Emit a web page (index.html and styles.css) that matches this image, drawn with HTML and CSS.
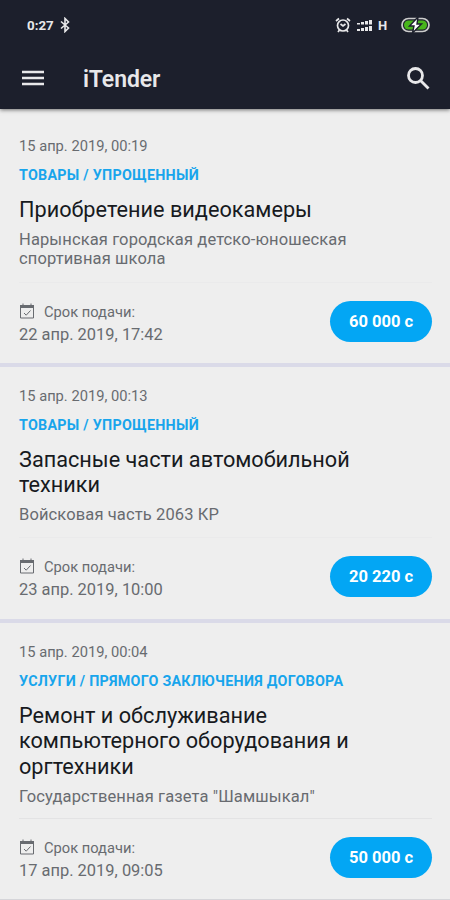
FILE: index.html
```html
<!DOCTYPE html>
<html lang="ru">
<head>
<meta charset="utf-8">
<title>iTender</title>
<link rel="stylesheet" href="styles.css">
</head>
<body>
<header class="top">
  <div class="status">
    <span class="time">0:27</span>
    <svg class="bt" width="10" height="16" viewBox="0 0 10 16"><path d="M1 4.500 8.500 11 5 14.500V1.500L8.500 5 1 11.500"/></svg>
    <span class="spacer"></span>
    <svg class="alarm" width="16" height="16" viewBox="0 0 16 16"><circle cx="8" cy="8.500" r="5.500"/><path d="M1 4 4 1.500M15 4 12 1.500M5.500 7l2.500 2 2.500-2M3 15l1.500-2M13 15l-1.500-2"/></svg>
    <svg class="signal" width="16" height="13" viewBox="0 0 16 13"><path d="M0 4h3v1.500H0zM4 3h3v2.500H4zM8 2h3v3.500H8zM12 1h3v4.500h-3zM0 10h3v2H0zM4 9h3v3H4zM8 8h3v4H8zM12 7h3v5h-3z"/></svg>
    <span class="net">H</span>
    <svg class="battery" width="30" height="16" viewBox="0 0 30 16"><rect class="shell" x="1" y="1.500" width="27" height="13" rx="6.500"/><rect class="charge" x="3" y="3.500" width="23" height="9" rx="4.500"/><path class="bolt" d="M17 0 8.500 9h4.500l-1.500 7 9-9h-4.500z"/></svg>
  </div>
  <div class="bar">
    <svg class="menu" width="22" height="16" viewBox="0 0 22 16"><path d="M0 2h22M0 8h22M0 14h22"/></svg>
    <h1>iTender</h1>
    <svg class="search" width="24" height="24" viewBox="0 0 24 24"><circle cx="9.500" cy="9.500" r="7"/><path d="m14.500 14.500 8 8"/></svg>
  </div>
</header>
<main>
  <article class="card first">
    <div class="date">15 апр. 2019, 00:19</div>
    <div class="type">ТОВАРЫ / УПРОЩЕННЫЙ</div>
    <h2>Приобретение видеокамеры</h2>
    <p>Нарынская городская детско-юношеская<br>спортивная школа</p>
    <footer><div><div class="label"><svg class="cal" width="16" height="17" viewBox="0 0 16 17"><path d="M1.500 3h13v12h-13zM4 .5v3M12 .5v3M5 10l2.200 2.200L11.500 7.500"/><path class="lid" d="M1 3.500h14"/></svg>Срок подачи:</div><div class="deadline">22 апр. 2019, 17:42</div></div><span class="price">60 000 с</span></footer>
  </article>
  <article class="card second">
    <div class="date">15 апр. 2019, 00:13</div>
    <div class="type">ТОВАРЫ / УПРОЩЕННЫЙ</div>
    <h2>Запасные части автомобильной<br>техники</h2>
    <p>Войсковая часть 2063 КР</p>
    <footer><div><div class="label"><svg class="cal" width="16" height="17" viewBox="0 0 16 17"><path d="M1.500 3h13v12h-13zM4 .5v3M12 .5v3M5 10l2.200 2.200L11.500 7.500"/><path class="lid" d="M1 3.500h14"/></svg>Срок подачи:</div><div class="deadline">23 апр. 2019, 10:00</div></div><span class="price">20 220 с</span></footer>
  </article>
  <article class="card third">
    <div class="date">15 апр. 2019, 00:04</div>
    <div class="type">УСЛУГИ / ПРЯМОГО ЗАКЛЮЧЕНИЯ ДОГОВОРА</div>
    <h2>Ремонт и обслуживание<br>компьютерного оборудования и<br>оргтехники</h2>
    <p>Государственная газета "Шамшыкал"</p>
    <footer><div><div class="label"><svg class="cal" width="16" height="17" viewBox="0 0 16 17"><path d="M1.500 3h13v12h-13zM4 .5v3M12 .5v3M5 10l2.200 2.200L11.500 7.500"/><path class="lid" d="M1 3.500h14"/></svg>Срок подачи:</div><div class="deadline">17 апр. 2019, 09:05</div></div><span class="price">50 000 с</span></footer>
  </article>
</main>
</body>
</html>
```
FILE: styles.css
```css
* { box-sizing: border-box; }
body { margin: 0; height: 900px; overflow: hidden; background: #eee; font-family: Roboto, sans-serif; color: #686b70; }
svg { fill: none; stroke: currentColor; flex: none; }
.top { position: relative; height: 109px; background: #1c1f2c; color: #e8e8ea; box-shadow: 0 1px 4px #0008; }
.status { display: flex; align-items: center; height: 50px; padding: 0 19px 0 27px; }
.time { font-size: 13.300px; font-weight: 700; width: 33px; }
.bt { stroke-width: 1.6; }
.spacer { flex: 1; }
.alarm { stroke-width: 1.7; margin-right: 6px; }
.signal { fill: currentColor; stroke: none; margin-right: 5px; }
.net { font-size: 13px; font-weight: 700; width: 23px; }
.shell { stroke: #ccc; stroke-width: 1.7; }
.charge { fill: #48b51c; stroke: none; }
.bolt { fill: #fff; stroke: #1c1f2c; stroke-width: 1.4; }
.bar { display: flex; align-items: center; height: 59px; padding: 0 20px 3px 21.500px; }
.menu { stroke-width: 2.7; }
h1 { flex: 1; margin: 4px 0 0 39.500px; font-size: 23px; line-height: 30px; font-weight: 600; letter-spacing: -.1px; }
.search { stroke-width: 2.8; }
.card { display: flex; flex-direction: column; padding: 27px 18px 0 19px; border-bottom: 4px solid #dadae8; white-space: nowrap; }
.first { height: 258px; }
.second { height: 256px; padding-top: 19px; }
.third { height: 277px; padding-top: 19px; border-bottom: 1px solid #d5d5d9; }
.date { font-size: 14.700px; line-height: 20px; }
.type { margin-top: 8.500px; font-size: 14.300px; line-height: 20px; font-weight: 700; letter-spacing: .27px; color: #18a5ec; }
h2 { margin: 12px 0 0; font-size: 21.700px; line-height: 25.500px; font-weight: 400; color: #171a1e; }
p { margin: 7.500px 0 0; font-size: 16.500px; line-height: 19.500px; letter-spacing: .12px; }
footer { display: flex; align-items: center; justify-content: space-between; height: 78px; margin-top: auto; margin-bottom: 3px; border-top: 1px solid #eaeaeb; }
.second footer { margin-bottom: 4px; }
.third footer { border-top-color: #e3e3e4; }
.label { display: flex; align-items: center; gap: 9px; font-size: 14.700px; line-height: 20px; margin-top: 5px; }
.lid { stroke-width: 3; }
.deadline { font-size: 16.450px; line-height: 23px; margin-top: 1.500px; }
.price { width: 102px; height: 41px; border-radius: 21px; background: #03a6f4; color: #fff; font-size: 16.500px; line-height: 41px; font-weight: 700; text-align: center; }
```
